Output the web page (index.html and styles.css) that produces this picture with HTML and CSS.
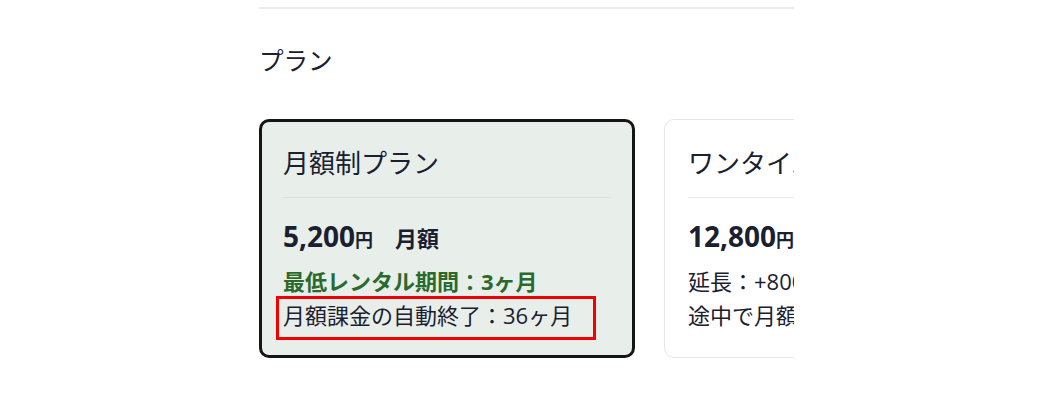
FILE: index.html
```html
<!DOCTYPE html>
<html lang="ja">
<head>
<meta charset="utf-8">
<title>プラン</title>
<link rel="stylesheet" href="styles.css">
</head>
<body>
<div class="page">
  <hr class="rule">
  <h2 class="heading">プラン</h2>
  <div class="plans">
    <div class="card card-selected">
      <div class="card-title">月額制プラン</div>
      <div class="divider"></div>
      <div class="price"><span class="amount">5,200</span><span class="yen">円</span><span class="unit">月額</span></div>
      <div class="line line-green">最低レンタル期間：3ヶ月</div>
      <div class="line line-marked">月額課金の自動終了：36ヶ月</div>
    </div>
    <div class="card">
      <div class="card-title">ワンタイムプラン</div>
      <div class="divider"></div>
      <div class="price"><span class="amount">12,800</span><span class="yen">円</span><span class="unit">一括</span></div>
      <div class="line">延長：+800円/月</div>
      <div class="line">途中で月額プランに変更可能</div>
    </div>
  </div>
</div>
</body>
</html>
```
FILE: styles.css
```css
html, body {
  margin: 0;
  padding: 0;
  background: #ffffff;
}
body {
  font-family: "Open Sans", "Noto Sans CJK JP", sans-serif;
  color: #1a2030;
}
.page {
  width: 535px;
  margin-left: 259px;
  padding-top: 7px;
}
.rule {
  margin: 0;
  border: 0;
  height: 2px;
  background: #e8ecf1;
}
.heading {
  margin: 33px 0 0;
  font-size: 24.5px;
  font-weight: 400;
  line-height: 36px;
  font-family: "Noto Sans CJK JP", sans-serif;
  color: #1a2030;
}
.plans {
  margin-top: 41px;
  display: flex;
  gap: 29px;
  overflow: hidden;
}
.card {
  flex: 0 0 376px;
  box-sizing: border-box;
  width: 376px;
  height: 239px;
  border: 1px solid #e3e6ea;
  border-radius: 10px;
  padding: 22px 23px 0;
  background: #ffffff;
}
.card-selected {
  border: 3px solid #151515;
  padding: 20px 21px 0;
  background: #e8eeea;
}
.card-title {
  font-family: "Noto Sans CJK JP", sans-serif;
  font-size: 26px;
  line-height: 39px;
  white-space: nowrap;
}
.divider {
  height: 1px;
  margin: 16px 0 0;
  background: #e6e9ec;
}
.card-selected .divider {
  background: #d9e0db;
}
.price {
  margin-top: 17px;
  font-weight: 700;
  line-height: 42px;
  white-space: nowrap;
}
.amount {
  font-size: 28px;
}
.yen {
  font-size: 18px;
  margin-left: 0;
}
.unit {
  font-size: 22px;
  margin-left: 22px;
  font-family: "Noto Sans CJK JP", sans-serif;
}
.line {
  font-size: 22px;
  line-height: 34px;
  white-space: nowrap;
}
.price + .line {
  margin-top: 2px;
}
.line-green {
  color: #2b6a2d;
  font-weight: 700;
}
.line-marked {
  position: relative;
}
.line-marked::after {
  content: "";
  position: absolute;
  left: -7px;
  right: 15px;
  top: -2px;
  bottom: -8px;
  border: 3px solid #f00000;
}
```
